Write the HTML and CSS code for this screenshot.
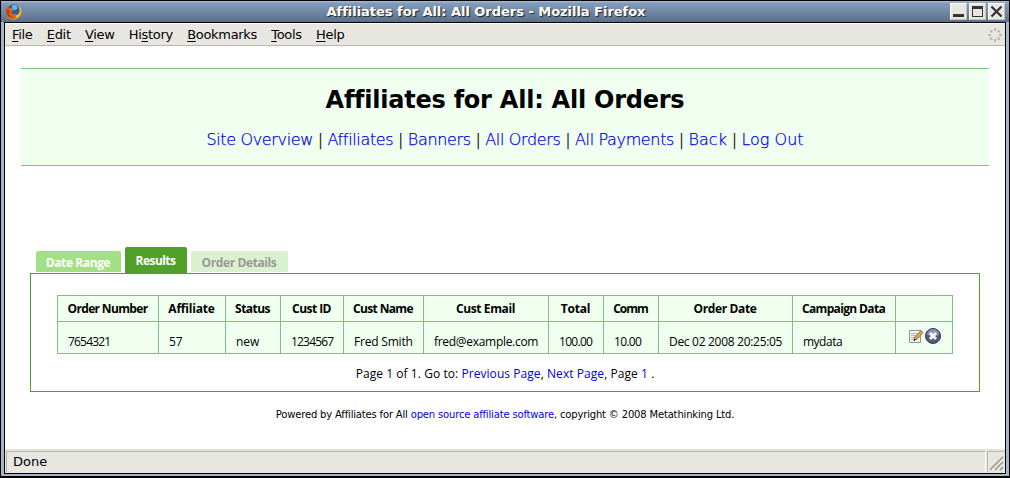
FILE: index.html
```html
<!DOCTYPE html>
<html lang="en">
<head>
<meta charset="utf-8">
<title>Affiliates for All: All Orders</title>
<link rel="stylesheet" href="styles.css">
</head>
<body>
<div class="window">
  <div class="titlebar">
    <svg class="logo" width="18" height="18" viewBox="0 0 18 18">
      <circle cx="9" cy="8.5" r="7.2" fill="#2b5c9e"/>
      <path d="M7 2.5Q10 1 12.5 3L12 6L9.5 7.5L7 6Z" fill="#63b5dc"/>
      <path d="M13 2C17 5 18 10 14 14C10 18 4 17 1.8 13L5 11L9 13L13 11.5L14.8 8Z" fill="#f3b62c"/>
      <path d="M2 3L4 5L6.5 5L8 8L6 9.5L8 11.5L11.5 10.8C10 15 11 15 13 14C8 18 1 16 1 9Q.8 5 2 3Z" fill="#e2641b"/>
      <path d="M1.5 6Q3.5 6 5 8L4 11Q6 14 9 14.5Q3 15 1.5 10Z" fill="#b93a12"/>
    </svg>
    <span class="caption">Affiliates for All: All Orders - Mozilla Firefox</span>
    <div class="controls">
      <svg width="17" height="17"><path d="M2 11.5H13" stroke="#333" stroke-width="3"/></svg>
      <svg width="17" height="17"><path d="M2 2H13V13H2ZM3 5V12H12V5Z" fill="#333" fill-rule="evenodd"/></svg>
      <svg width="17" height="17"><path d="M2.500 2.500L12.500 12.500M12.500 2.500L2.500 12.500" stroke="#333" stroke-width="2.200"/></svg>
    </div>
  </div>
  <div class="client">
    <div class="menubar">
      <span><u>F</u>ile</span><span><u>E</u>dit</span><span><u>V</u>iew</span><span>Hi<u>s</u>tory</span><span><u>B</u>ookmarks</span><span><u>T</u>ools</span><span><u>H</u>elp</span>
      <svg class="throbber" width="16" height="16" viewBox="0 0 16 16" fill="#bbb9b2">
        <path d="M7 1h2v3H7zM7 12h2v3H7zM1 7h3v2H1zM12 7h3v2h-3zM3 3h2.5v2.5H3zM10.500 3H13v2.500h-2.500zM3 10.500h2.500V13H3zM10.500 10.500H13V13h-2.500z"/>
      </svg>
    </div>
    <main class="page">
      <header class="masthead">
        <h1>Affiliates for All: All Orders</h1>
        <nav><a>Site Overview</a> | <a>Affiliates</a> | <a>Banners</a> | <a>All Orders</a> | <a>All Payments</a> | <a class="wide">Back</a> | <a class="wide">Log Out</a></nav>
      </header>
      <div class="tabs">
        <div class="tab range">Date Range</div>
        <div class="tab results">Results</div>
        <div class="tab details">Order Details</div>
      </div>
      <section class="panel">
        <table>
          <colgroup><col class="c1"><col class="c2"><col class="c3"><col class="c4"><col class="c5"><col class="c6"><col class="c7"><col class="c8"><col class="c9"><col class="c10"><col class="c11"></colgroup>
          <tr><th>Order Number</th><th>Affiliate</th><th>Status</th><th>Cust ID</th><th>Cust Name</th><th>Cust Email</th><th>Total</th><th>Comm</th><th>Order Date</th><th>Campaign Data</th><th></th></tr>
          <tr><td>7654321</td><td>57</td><td>new</td><td>1234567</td><td>Fred Smith</td><td>fred@example.com</td><td>100.00</td><td>10.00</td><td>Dec 02 2008 20:25:05</td><td>mydata</td>
            <td><div class="actions">
              <svg width="16" height="16" viewBox="0 0 16 16">
                <path d="M1.500 2.500H12.500V14.500H1.500Z" fill="#f3f3f3" stroke="#929292"/>
                <path d="M3 5.500H10M3 7.500H8M3 9.500H7M3 11.500H6" stroke="#b5b5b5"/>
                <path d="M6 12.500L7 9L13 2.500L15 4.500L9 11Z" fill="#e3a84a" stroke="#805320" stroke-width=".8"/>
                <path d="M5.500 13L6.500 10.500L8 12Z" fill="#222"/>
              </svg>
              <svg width="16" height="16" viewBox="0 0 16 16">
                <circle cx="8" cy="8" r="7.500" fill="#55597f" stroke="#353854"/>
                <path d="M2 7A6 6 0 0 1 14 7Q8 9 2 7Z" fill="#8d91b3"/>
                <path d="M5 5L11 11M11 5L5 11" stroke="#fff" stroke-width="2.800"/>
              </svg>
            </div></td></tr>
        </table>
        <p class="pager">Page 1 of 1. Go to: <a>Previous Page</a>, <a>Next Page</a>, Page <a>1</a> .</p>
      </section>
      <footer>Powered by Affiliates for All <a>open source affiliate software</a>, copyright © 2008 Metathinking Ltd.</footer>
    </main>
    <div class="statusbar">
      <div class="message">Done</div>
      <div class="grip"><svg width="16" height="20"><path d="M2 18L15 5M7 18L15 10M12 18L15 15" stroke="#aaa79b" stroke-width="2"/><path d="M4 18L15 7M9 18L15 12" stroke="#fff"/></svg></div>
    </div>
  </div>
</div>
</body>
</html>
```
FILE: styles.css
```css
* { box-sizing: border-box; }
body { margin: 0; font-family: "DejaVu Sans", sans-serif; color: #000; }
a { color: #0000e6; }
.window { width: 1010px; height: 478px; display: flex; flex-direction: column; background: #a3b4cd; border: 1px solid #000; border-bottom-width: 2px; }
.titlebar { height: 21px; display: flex; align-items: center; background: linear-gradient(#b0c0d8 0, #839cbc 2px, #7088a5 11px, #5b6f88 100%); padding: 0 4px; }
.logo { width: 18px; }
.caption { flex: 1; padding-right: 1px; text-align: center; font-size: 13px; letter-spacing: -.03px; font-weight: bold; line-height: 20px; color: #fff; text-shadow: 1px 1px 1px #222; }
.controls { display: flex; gap: 2px; }
.controls svg { background: #e8e6e1; border: 1px solid #fff; border-right-color: #c8c5bc; border-bottom-color: #c8c5bc; }
.client { flex: 1; margin: 0 3px 2px; border: 1px solid #000; display: flex; flex-direction: column; background: #fff; }
.menubar { height: 23px; display: flex; align-items: center; gap: 14.200px; padding: 0 2px 0 7px; font-size: 13px; letter-spacing: -.3px; background: #e8e6e1; border-bottom: 1px solid #bab7aa; border-top: 1px solid #fff; }
.menubar u { text-underline-offset: 2px; text-decoration-thickness: 1px; }
.throbber { margin-left: auto; }
.page { flex: 1; padding: 22px 16px 0; }
.masthead { height: 98px; border-top: 1px solid #80c080; border-bottom: 1px solid #80c080; background: #f0fff0; text-align: center; padding-top: 17px; }
h1 { margin: 0; font-size: 24px; line-height: 29px; letter-spacing: -.24px; }
nav { margin-top: 14px; font-size: 16px; font-weight: 200; line-height: 22px; white-space: nowrap; letter-spacing: -.35px; -webkit-text-stroke: .25px; }
.wide { letter-spacing: 0; }
.tabs { height: 26px; margin: 81px 0 0 15px; display: flex; align-items: flex-end; font-family: "Open Sans", sans-serif; font-size: 12px; font-weight: bold; color: #fff; text-align: center; letter-spacing: -.4px; }
.tab { border-radius: 2px 2px 0 0; line-height: 23px; padding-right: 1px; }
.range { width: 85px; height: 21px; margin-bottom: 1px; background: #a3e085; }
.results { width: 62px; height: 26px; margin: 0 4px; background: #50a029; line-height: 27px; letter-spacing: -.55px; }
.details { width: 97px; height: 21px; margin-bottom: 1px; background: #d9f1ce; color: #999; }
.panel { width: 950px; height: 119px; margin-left: 9px; padding: 21px 26px; border: 1px solid #50a029; font-family: "Open Sans", sans-serif; font-size: 12px; }
table { width: 896px; table-layout: fixed; border-spacing: 1px; background: #80c080; }
th, td { padding: 0; background: #f0fff0; white-space: nowrap; line-height: 16px; }
th { height: 25px; padding: 1px 1px 0 0; letter-spacing: -.65px; }
th:nth-child(2), th:nth-child(7) { letter-spacing: -.2px; }
th:nth-child(3), th:nth-child(4) { letter-spacing: -.55px; }
th:nth-child(6), th:nth-child(9) { letter-spacing: -.38px; }
th:nth-child(8) { letter-spacing: -1px; }
td { height: 31px; padding: 8px 0 0 10px; letter-spacing: -.3px; }
td:nth-child(1), td:nth-child(4) { letter-spacing: -.8px; }
td:nth-child(2), td:nth-child(3) { letter-spacing: -.1px; }
td:nth-child(5) { letter-spacing: -.2px; }
td:nth-child(7), td:nth-child(8) { letter-spacing: -.7px; }
td:nth-child(10) { letter-spacing: -.5px; }
.c1 { width: 100px; } .c2 { width: 66px; } .c3 { width: 54px; } .c4 { width: 62px; } .c5 { width: 79px; } .c6 { width: 124px; }
.c7 { width: 54px; } .c8 { width: 54px; } .c9 { width: 133px; } .c10 { width: 102px; } .c11 { width: 56px; }
.actions { display: flex; gap: 1px; margin: -11px 0 0 2px; }
.pager { margin: 12px 0 0; line-height: 16px; text-align: center; letter-spacing: .06px; }
footer { margin-top: 16px; font-size: 10px; line-height: 14px; text-align: center; letter-spacing: -.17px; }
.statusbar { height: 24px; display: flex; gap: 1px; padding: 1px; background: #e8e6e1; border-top: 1px solid #dedbd3; }
.message { flex: 1; padding-left: 6px; font-size: 13px; line-height: 19px; border: 1px solid #bab7aa; border-width: 1px 0 0 1px; border-right: 1px solid #fff; }
.grip { width: 17px; border: 1px solid #bab7aa; border-width: 1px 0 0 1px; }
.grip svg { display: block; }
```
